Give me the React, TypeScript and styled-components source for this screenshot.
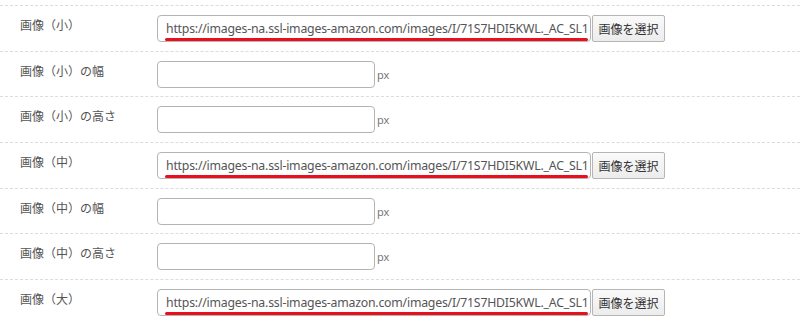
import styled, { createGlobalStyle } from "styled-components"

const GlobalStyle = createGlobalStyle`
  html, body {
    margin: 0;
    padding: 0;
    background: #fff;
  }
  body {
    font-family: "Noto Sans", "Noto Sans CJK JP", sans-serif;
  }
`

const URL_VALUE = "https://images-na.ssl-images-amazon.com/images/I/71S7HDI5KWL._AC_SL1500_.jpg"

type FieldKind = "url" | "size"

const rows: { label: string; kind: FieldKind }[] = [
  { label: "画像（小）", kind: "url" },
  { label: "画像（小）の幅", kind: "size" },
  { label: "画像（小）の高さ", kind: "size" },
  { label: "画像（中）", kind: "url" },
  { label: "画像（中）の幅", kind: "size" },
  { label: "画像（中）の高さ", kind: "size" },
  { label: "画像（大）", kind: "url" },
]

const Form = styled.div`
  width: 800px;
  padding-top: 5px;
  overflow: hidden;
`

const Row = styled.div`
  display: grid;
  grid-template-columns: 157px 1fr;
  border-top: 1px dashed #dcdcdc;
  padding: 9px 0 8.67px;
`

const Label = styled.div`
  padding-left: 20px;
  font-family: "Noto Sans CJK JP", sans-serif;
  font-size: 12px;
  line-height: 20px;
  color: #555;
`

const Field = styled.div`
  display: flex;
  align-items: center;
`

const UrlWrap = styled.div`
  position: relative;
  display: flex;
`

const TextInput = styled.input<{ $width: number }>`
  box-sizing: border-box;
  width: ${({ $width }) => $width}px;
  height: 27px;
  margin: 0;
  padding: 0 3px 0 8px;
  border: 1px solid #b4b4b4;
  border-radius: 4px;
  background: #fff;
  color: #555;
  font-family: "Noto Sans", sans-serif;
  font-size: 12.3px;
  letter-spacing: -0.22px;
  outline: none;
`

/* 赤い下線（スクリーンショット上のマーカー） */
const Marker = styled.span`
  position: absolute;
  left: 8px;
  right: 3px;
  bottom: 1px;
  height: 3px;
  border-radius: 2px;
  background: #e8101c;
  pointer-events: none;
`

const Unit = styled.span`
  margin-left: 2px;
  font-size: 11px;
  color: #777;
  line-height: 1;
`

const PickButton = styled.button`
  box-sizing: border-box;
  height: 27px;
  width: 73px;
  margin-left: 1px;
  padding: 0;
  border: 1px solid #b5b5b5;
  border-radius: 2px;
  background: linear-gradient(#fafafa, #ececec);
  color: #333;
  font-family: "Noto Sans CJK JP", sans-serif;
  font-size: 12px;
  cursor: pointer;
`

function UrlField() {
  return (
    <Field>
      <UrlWrap>
        <TextInput $width={434} type="text" defaultValue={URL_VALUE} />
        <Marker />
      </UrlWrap>
      <PickButton type="button">画像を選択</PickButton>
    </Field>
  )
}

function SizeField() {
  return (
    <Field>
      <TextInput $width={218} type="text" defaultValue="" />
      <Unit>px</Unit>
    </Field>
  )
}

export default function App() {
  return (
    <>
      <GlobalStyle />
      <Form>
        {rows.map((row, i) => (
          <Row key={i}>
            <Label>{row.label}</Label>
            {row.kind === "url" ? <UrlField /> : <SizeField />}
          </Row>
        ))}
      </Form>
    </>
  )
}
